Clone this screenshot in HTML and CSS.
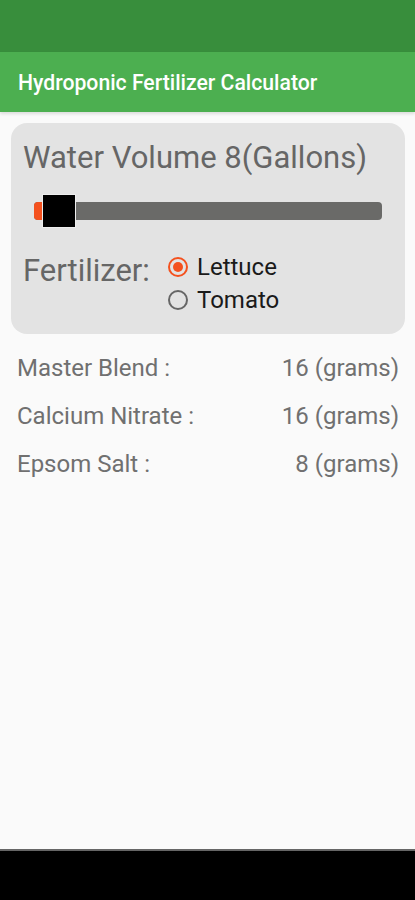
FILE: index.html
```html
<!DOCTYPE html>
<html>
<head>
<meta charset="utf-8">
<link rel="stylesheet" href="styles.css">
</head>
<body>
<div class="screen">
  <div class="statusbar"></div>
  <div class="appbar"><span class="title">Hydroponic Fertilizer Calculator</span></div>
  <main class="content">
    <section class="card">
      <div class="volume">Water Volume 8(Gallons)</div>
      <div class="slider">
        <div class="track">
          <div class="fill"></div>
          <div class="thumb"></div>
        </div>
      </div>
      <div class="fert">
        <div class="fert-label">Fertilizer:</div>
        <div class="radios">
          <div class="radio checked"><span class="dot"></span><span class="rlabel">Lettuce</span></div>
          <div class="radio"><span class="dot"></span><span class="rlabel">Tomato</span></div>
        </div>
      </div>
    </section>
    <div class="results">
      <div class="row"><span>Master Blend :</span><span>16 (grams)</span></div>
      <div class="row"><span>Calcium Nitrate :</span><span>16 (grams)</span></div>
      <div class="row"><span>Epsom Salt :</span><span>8 (grams)</span></div>
    </div>
  </main>
  <div class="navbar"></div>
</div>
</body>
</html>
```
FILE: styles.css
```css
* { box-sizing: border-box; }
html, body { margin: 0; padding: 0; }
body {
  font-family: Roboto, "Noto Sans", "Liberation Sans", sans-serif;
  background: #fafafa;
}
.screen {
  width: 415px;
  height: 900px;
  display: flex;
  flex-direction: column;
}
.statusbar {
  height: 52px;
  background: #388e3c;
}
.appbar {
  height: 60px;
  background: #4caf50;
  display: flex;
  align-items: center;
  padding-left: 18px;
  box-shadow: 0 2px 3px rgba(0,0,0,0.12);
  position: relative;
}
.title {
  color: #fff;
  font-size: 21.2px;
  font-weight: 500;
}
.content {
  flex: 1;
  padding: 11px 10px 0 11px;
}
.card {
  background: #e3e3e3;
  border-radius: 16px;
  padding: 17px 12px 0 12px;
  height: 211px;
}
.volume {
  font-size: 31px;
  color: #666;
  line-height: 36px;
}
.slider {
  margin-top: 18px;
  padding: 0 11px;
  height: 34px;
  display: flex;
  align-items: center;
}
.track {
  position: relative;
  flex: 1;
  height: 18px;
  background: #6a6a68;
  border-radius: 4px;
}
.fill {
  position: absolute;
  left: 0;
  top: 0;
  height: 18px;
  width: 12px;
  background: #f4511e;
  border-radius: 4px 0 0 4px;
}
.thumb {
  position: absolute;
  left: 8px;
  top: -8px;
  width: 34px;
  height: 34px;
  background: #000;
  border: 1px solid #eee;
}
.fert {
  display: flex;
  margin-top: 25px;
}
.fert-label {
  font-size: 31px;
  color: #666;
  line-height: 36px;
  width: 145px;
}
.radios {
  display: flex;
  flex-direction: column;
  gap: 5px;
}
.radio {
  display: flex;
  align-items: center;
  height: 28px;
}
.dot {
  width: 20px;
  height: 20px;
  border-radius: 50%;
  border: 2px solid #666;
  margin-right: 9px;
  position: relative;
}
.radio.checked .dot {
  border-color: #f4511e;
}
.radio.checked .dot::after {
  content: "";
  position: absolute;
  left: 3px;
  top: 3px;
  width: 10px;
  height: 10px;
  border-radius: 50%;
  background: #f4511e;
}
.rlabel {
  font-size: 24px;
  color: #1a1a1a;
}
.results {
  padding: 10px 6px 0 6px;
}
.row {
  display: flex;
  justify-content: space-between;
  height: 48px;
  align-items: center;
  font-size: 24px;
  color: #707070;
}
.navbar {
  height: 51px;
  background: #000;
  border-top: 2px solid #666;
}
```
